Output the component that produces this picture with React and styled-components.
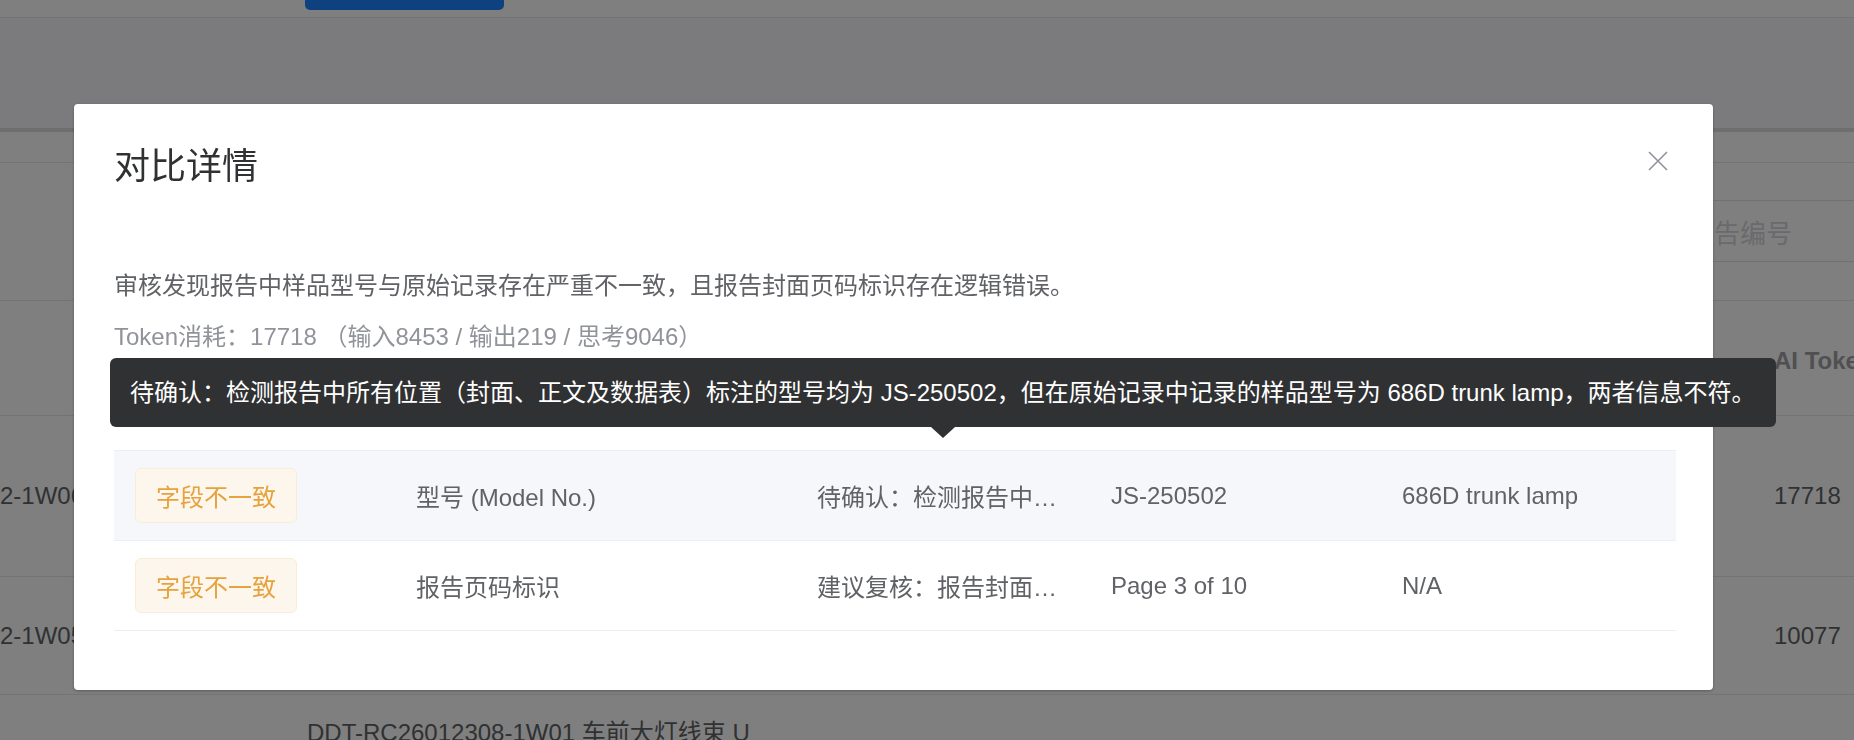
import React from "react";
import styled, { createGlobalStyle } from "styled-components";

const GlobalStyle = createGlobalStyle`
  * { box-sizing: border-box; }
  html, body { margin: 0; padding: 0; }
  body {
    width: 1854px;
    height: 740px;
    overflow: hidden;
    background: #f6f6fa;
    font-family: "Liberation Sans", "Noto Sans CJK SC", sans-serif;
  }
`;

const rows = [
  {
    type: "字段不一致",
    field: "型号 (Model No.)",
    note: "待确认：检测报告中所有位置（封面、正文及数据表）标注的型号均为 JS-250502，但在原始记录中记录的样品型号为 686D trunk lamp，两者信息不符。",
    report: "JS-250502",
    origin: "686D trunk lamp",
    active: true,
  },
  {
    type: "字段不一致",
    field: "报告页码标识",
    note: "建议复核：报告封面页码标识为 Page 3 of 10，与报告实际总页数不符，存在逻辑错误。",
    report: "Page 3 of 10",
    origin: "N/A",
  },
];

function CloseIcon() {
  return (
    <svg width="22" height="22" viewBox="0 0 22 22">
      <path d="M2 2 L20 20 M20 2 L2 20" stroke="#909399" strokeWidth="1.6" fill="none" />
    </svg>
  );
}

export default function App() {
  return (
    <>
      <GlobalStyle />
      <Page>
        <TopBar>
          <PrimaryButton />
        </TopBar>
        <Card>
          <TabsRow />
          <FilterRow>
            <SearchInput>请输入报告编号</SearchInput>
          </FilterRow>
          <BgTable>
            <BgRow $h={115}>
              <BgCell />
              <BgCell />
              <BgHeadCell>AI Token消耗</BgHeadCell>
            </BgRow>
            <BgRow $h={161}>
              <BgCell>2-1W06</BgCell>
              <BgCell />
              <BgCell>17718</BgCell>
            </BgRow>
            <BgRow $h={118}>
              <BgCell>2-1W05</BgCell>
              <BgCell />
              <BgCell>10077</BgCell>
            </BgRow>
            <BgRow $h={80} $top>
              <BgCell />
              <BgCell>DDT-RC26012308-1W01 车前大灯线束 U</BgCell>
              <BgCell />
            </BgRow>
          </BgTable>
        </Card>
      </Page>

      <Overlay>
        <Dialog>
          <Title>对比详情</Title>
          <CloseButton>
            <CloseIcon />
          </CloseButton>
          <Summary>审核发现报告中样品型号与原始记录存在严重不一致，且报告封面页码标识存在逻辑错误。</Summary>
          <TokenLine>Token消耗：17718 （输入8453 / 输出219 / 思考9046）</TokenLine>

          <Table>
            <HeadRow />
            {rows.map((r, i) => (
              <Row key={i} $active={r.active}>
                <Cell>
                  <Tag>{r.type}</Tag>
                </Cell>
                <Cell>{r.field}</Cell>
                <Cell>
                  <Ellipsis>{r.note}</Ellipsis>
                </Cell>
                <Cell>{r.report}</Cell>
                <Cell>{r.origin}</Cell>
              </Row>
            ))}
          </Table>

          <Tooltip>
            {rows[0].note}
            <TooltipArrow />
          </Tooltip>
        </Dialog>
      </Overlay>
    </>
  );
}

/* ---------- page behind the dialog ---------- */

const Page = styled.div`
  width: 1854px;
  height: 740px;
  overflow: hidden;
  display: flex;
  flex-direction: column;
  background: #f6f6fa;
  color: #606266;
  font-size: 24px;
`;

const TopBar = styled.div`
  height: 18px;
  flex-shrink: 0;
  background: #ffffff;
  border-bottom: 1px solid #e2e8ea;
  padding-left: 305px;
`;

const PrimaryButton = styled.div`
  width: 199px;
  height: 10px;
  background: #1a82ff;
  border-radius: 0 0 5px 5px;
`;

const Card = styled.div`
  margin-top: 110px;
  flex: 1;
  display: flex;
  flex-direction: column;
  background: #ffffff;
  border-top: 4px solid #dcdce0;
`;

const TabsRow = styled.div`
  height: 31px;
  flex-shrink: 0;
  border-bottom: 1px solid #e6e6ea;
`;

const FilterRow = styled.div`
  display: flex;
  justify-content: flex-end;
  padding-top: 37px;
  height: 137px;
  flex-shrink: 0;
`;

const SearchInput = styled.div`
  width: 260px;
  height: 62px;
  display: flex;
  align-items: center;
  padding-left: 16px;
  border-top: 1px solid #e2e2e8;
  border-bottom: 1px solid #e2e2e8;
  color: #d4d4d9;
  font-size: 26px;
  white-space: nowrap;
  overflow: hidden;
`;

const BgTable = styled.div`
  border-top: 1px solid #e6e6ea;
`;

const BgRow = styled.div`
  display: grid;
  grid-template-columns: 300px 1467px 1fr;
  height: ${(p) => p.$h}px;
  align-items: ${(p) => (p.$top ? "start" : "center")};
  padding-top: ${(p) => (p.$top ? "18px" : "0")};
  border-bottom: 1px solid #e6e6ea;
`;

const BgCell = styled.div`
  padding-left: 7px;
  white-space: nowrap;
  overflow: hidden;
  color: #606266;
  &:first-child {
    padding-left: 0;
  }
`;

const BgHeadCell = styled(BgCell)`
  font-weight: 700;
  color: #a0a0a6;
`;

/* ---------- dialog ---------- */

const Overlay = styled.div`
  position: fixed;
  inset: 0;
  background: rgba(0, 0, 0, 0.5);
`;

const Dialog = styled.div`
  position: relative;
  width: 1639px;
  margin: 104px 0 0 74px;
  padding: 38px 37px 59px 40px;
  background: #ffffff;
  border-radius: 4px;
  box-shadow: 0 1px 3px rgba(0, 0, 0, 0.3);
`;

const Title = styled.h2`
  margin: 0;
  font-size: 36px;
  line-height: 50px;
  font-weight: 400;
  color: #303133;
`;

const CloseButton = styled.div`
  position: absolute;
  top: 46px;
  right: 44px;
  width: 22px;
  height: 22px;
  display: flex;
`;

const Summary = styled.p`
  margin: 76px 0 0;
  font-size: 24px;
  line-height: 36px;
  color: #606266;
`;

const TokenLine = styled.p`
  margin: 15px 0 0;
  font-size: 24px;
  line-height: 36px;
  color: #909399;
`;

const Table = styled.div`
  margin-top: 20px;
  font-size: 24px;
  color: #606266;
`;

const gridCols = "283px 401px 294px 291px 1fr";

const HeadRow = styled.div`
  height: 76px;
  border-bottom: 1px solid #ebeef5;
`;

const Row = styled.div`
  display: grid;
  grid-template-columns: ${gridCols};
  align-items: center;
  height: 90px;
  background: ${(p) => (p.$active ? "#f5f7fa" : "#ffffff")};
  border-bottom: 1px solid #ebeef5;
`;

const Cell = styled.div`
  padding: 0 19px;
  min-width: 0;
  white-space: nowrap;
  &:first-child {
    padding-left: 21px;
  }
`;

const Ellipsis = styled.div`
  overflow: hidden;
  text-overflow: ellipsis;
  white-space: nowrap;
`;

const Tag = styled.span`
  display: inline-flex;
  align-items: center;
  height: 55px;
  padding: 0 20px;
  background: #fdf6ec;
  border: 1.5px solid #faecd8;
  border-radius: 6px;
  color: #e6a23c;
  font-size: 24px;
`;

const Tooltip = styled.div`
  position: absolute;
  left: 36px;
  top: 254px;
  padding: 16px 20px;
  line-height: 37px;
  font-size: 24px;
  white-space: nowrap;
  color: #ffffff;
  background: #303133;
  border-radius: 6px;
`;

const TooltipArrow = styled.span`
  position: absolute;
  left: 821px;
  bottom: -11px;
  width: 0;
  height: 0;
  border-left: 12px solid transparent;
  border-right: 12px solid transparent;
  border-top: 11px solid #303133;
`;
